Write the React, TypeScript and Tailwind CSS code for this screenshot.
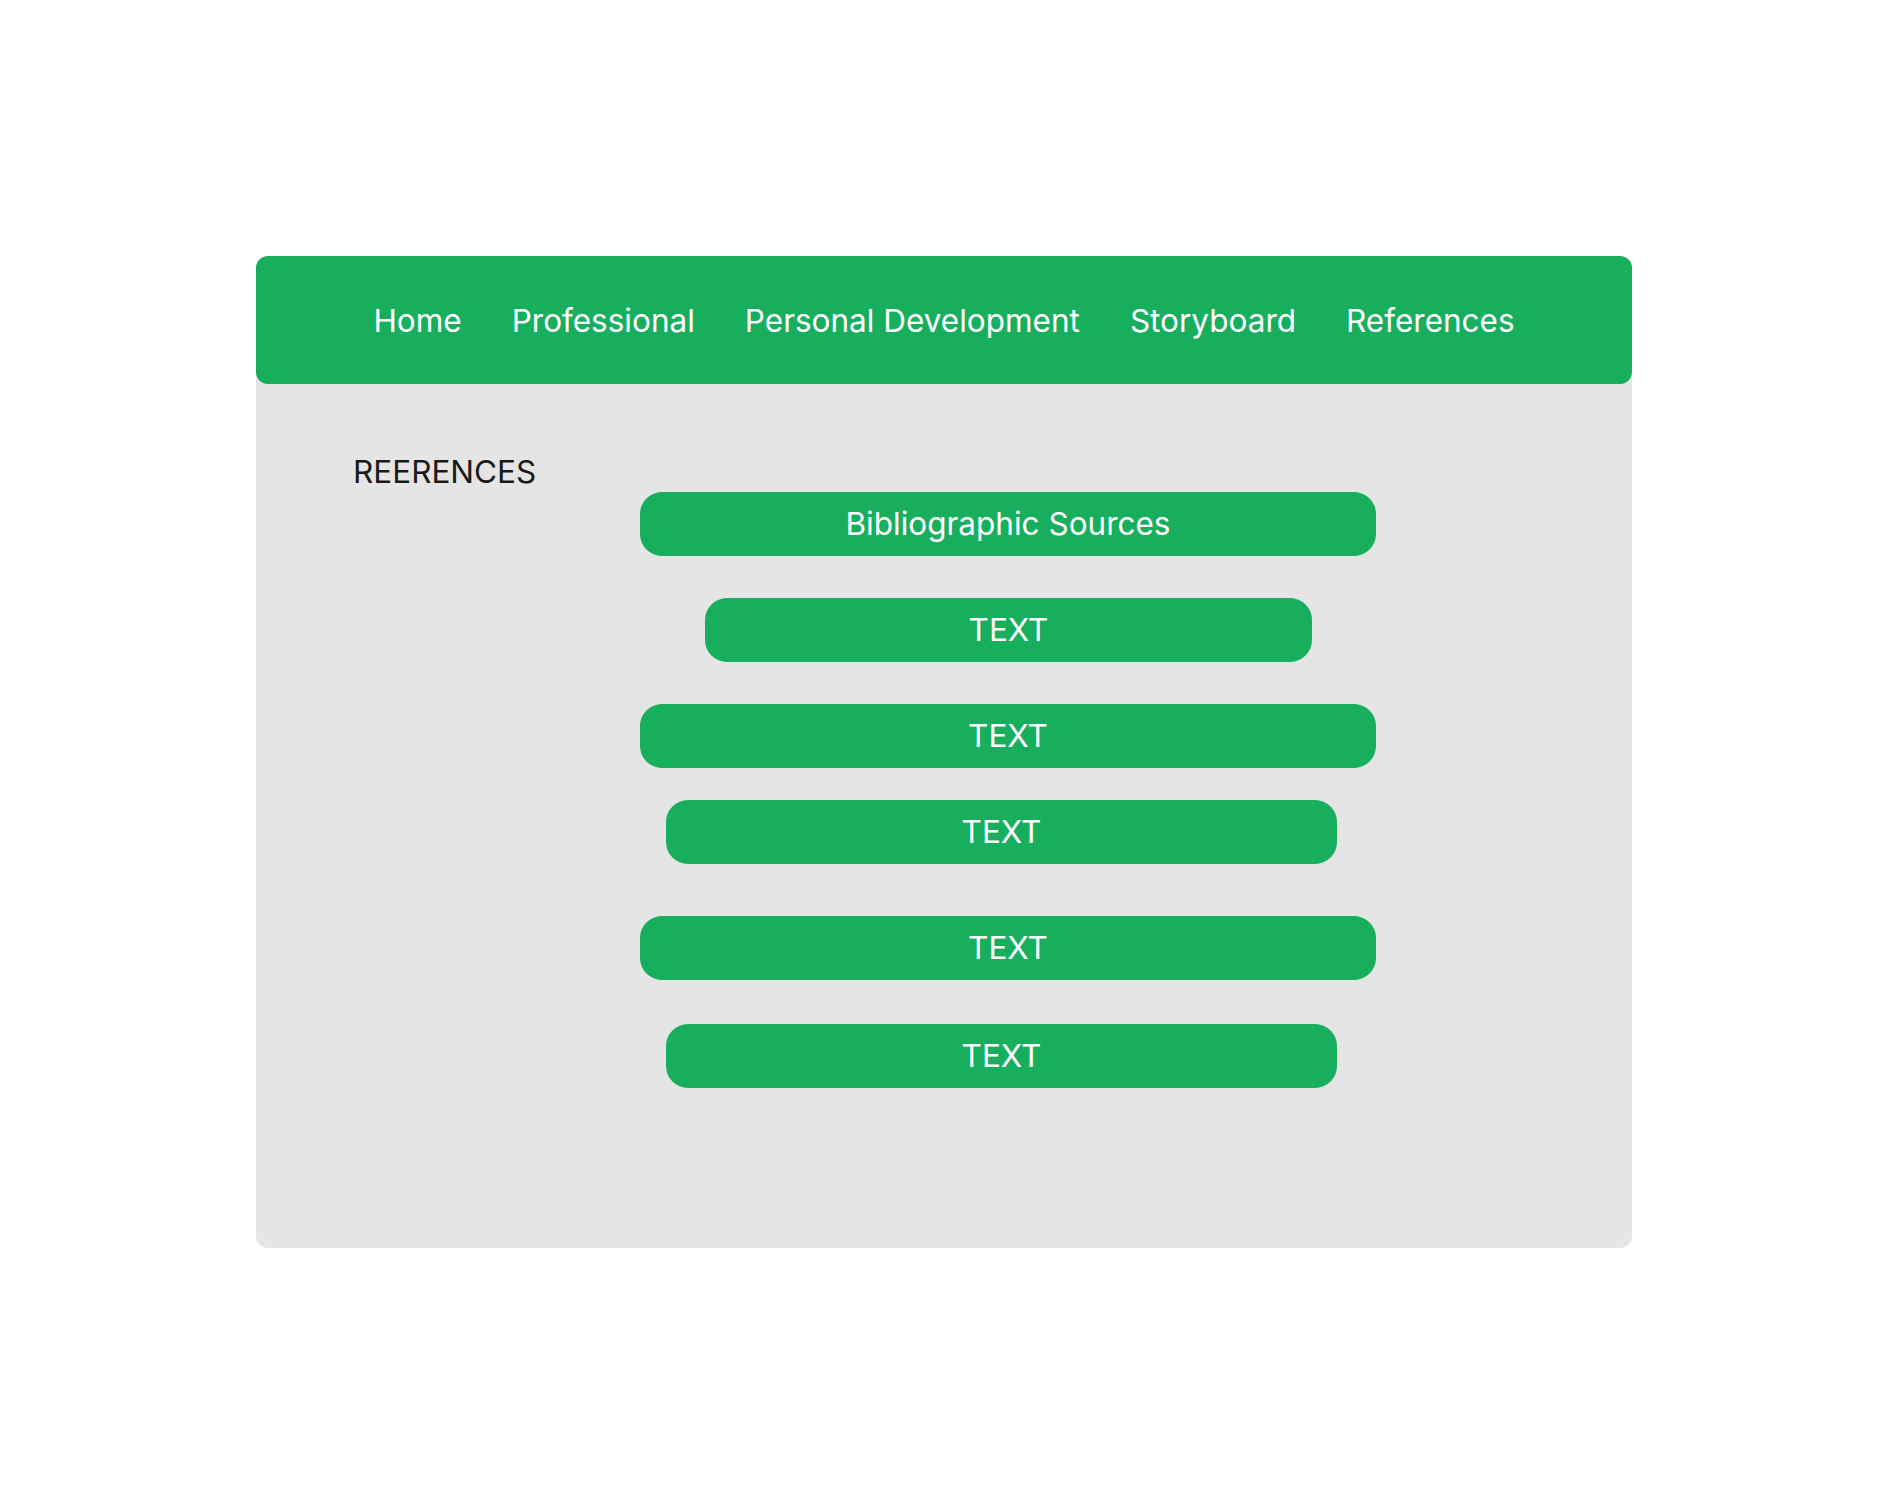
const navItems = ['Home', 'Professional', 'Personal Development', 'Storyboard', 'References'];

// each row: offset inside the 736px column, width, gap above
const rows = [
  { label: 'Bibliographic Sources', cls: 'ml-0 w-[736px] mt-0' },
  { label: 'TEXT', cls: 'ml-[65px] w-[607px] mt-[42px]' },
  { label: 'TEXT', cls: 'ml-0 w-[736px] mt-[42px]' },
  { label: 'TEXT', cls: 'ml-[26px] w-[671px] mt-[32px]' },
  { label: 'TEXT', cls: 'ml-0 w-[736px] mt-[52px]' },
  { label: 'TEXT', cls: 'ml-[26px] w-[671px] mt-[44px]' },
];

export default function App() {
  return (
    <div className="min-h-[1504px] bg-white pt-[256px] font-['Inter',sans-serif]">
      <div className="mx-auto w-[1376px] h-[992px] rounded-[12px] bg-[#e5e5e5] flex flex-col">
        {/* Top nav */}
        <nav className="h-[128px] pt-[2px] rounded-[12px] bg-[#17af5e] flex items-center justify-center gap-[50px]">
          {navItems.map((item) => (
            <a key={item} className="text-white text-[31.5px] leading-none cursor-pointer">
              {item}
            </a>
          ))}
        </nav>

        <div className="pt-[72px] pl-[97px]">
          <h2 className="text-[31.5px] leading-none text-[#1a1a1a]">REERENCES</h2>
        </div>

        <div className="ml-[384px] mt-[4px] w-[736px] flex flex-col">
          {rows.map((row, i) => (
            <button
              key={i}
              className={`${row.cls} h-[64px] rounded-[22px] bg-[#17af5e] text-white text-[31.5px] leading-none flex items-center justify-center`}
            >
              {row.label}
            </button>
          ))}
        </div>
      </div>
    </div>
  );
}
